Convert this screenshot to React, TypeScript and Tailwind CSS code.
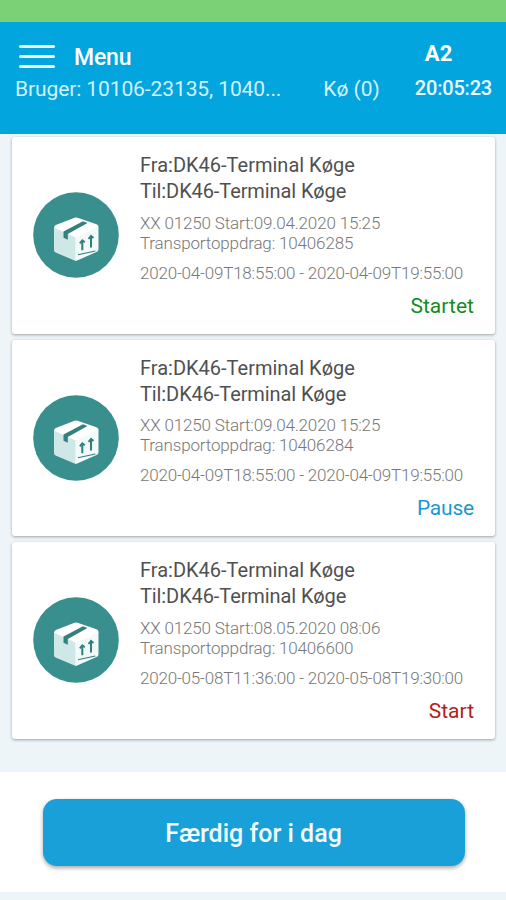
type Job = {
  id: string;
  start: string;
  period: string;
  status: string;
  statusClass: string;
};

const jobs: Job[] = [
  {
    id: '10406285',
    start: '09.04.2020 15:25',
    period: '2020-04-09T18:55:00 - 2020-04-09T19:55:00',
    status: 'Startet',
    statusClass: 'text-[#128c1e] tracking-[0.050px]',
  },
  {
    id: '10406284',
    start: '09.04.2020 15:25',
    period: '2020-04-09T18:55:00 - 2020-04-09T19:55:00',
    status: 'Pause',
    statusClass: 'text-[#1a98d0] tracking-[-0.200px]',
  },
  {
    id: '10406600',
    start: '08.05.2020 08:06',
    period: '2020-05-08T11:36:00 - 2020-05-08T19:30:00',
    status: 'Start',
    statusClass: 'text-[#b3201c]',
  },
];

function ParcelIcon() {
  return (
    <svg viewBox="0 0 86 86" className="size-[86px] shrink-0" aria-hidden="true">
      <circle cx="43" cy="43" r="42.8" fill="#398f8e" />
      <path d="M21 35 43 44V69L41.500 68.500 22.500 60.500Q21 59.800 21 58Z" fill="#cfe7e6" />
      <path d="M42.300 45.500 65.500 35V57Q65.500 59.300 63.500 60L44.200 68.500Q42.300 69.200 42.300 68Z" fill="#f1faf9" />
      <path d="M21.200 35.800Q21 33.800 22.800 33L41.500 25.800Q43 25.300 44.500 25.800L63.500 32.200Q65.800 33 65.500 35.500L43 45.800Z" fill="#ffffff" />
      <path d="M30.500 39.500 50 29.200 54.500 31 34.800 42V47.800L30.500 45.800Z" fill="#34807f" />
      <g stroke="#2f7f7f" fill="none">
        <path d="M49.300 58.300V49.500M58 55.500V45" strokeWidth="2" />
        <path d="M46.800 51.300 49.300 48.300 51.800 50.300M55.500 47 58 43.800 60.500 46" strokeWidth="1.800" />
        <path d="M45 62.800 62.300 59" strokeWidth="1.100" />
      </g>
    </svg>
  );
}

function JobCard({ job }: { job: Job }) {
  return (
    <article className="flex h-[196.500px] items-center rounded-[3px] bg-white pr-[21px] pl-[21px] shadow-[0_1px_3px_rgba(0,0,0,0.35)]">
      <ParcelIcon />
      <div className="ml-[21px] flex min-w-0 flex-1 flex-col whitespace-nowrap">
        <h2 className="text-[20px] leading-[26px] text-[#505050]">
          <span className="block">Fra:DK46-Terminal Køge</span>
          <span className="block tracking-[-0.100px]">Til:DK46-Terminal Køge</span>
        </h2>
        <p className="mt-[8.500px] text-[17px] leading-5 font-light tracking-[-0.160px] text-[#777777]">
          <span className="block">XX 01250 Start:{job.start}</span>
          <span className="block">Transportoppdrag: {job.id}</span>
        </p>
        <p className="mt-[10px] text-[17px] leading-5 font-light tracking-[-0.200px] text-[#777777]">{job.period}</p>
        <p className={`mt-[10px] -mb-[0.500px] text-right text-[21px] leading-[26px] ${job.statusClass}`}>{job.status}</p>
      </div>
    </article>
  );
}

export default function App() {
  return (
    <div className="flex h-[900px] w-[506px] flex-col overflow-hidden bg-[#eef5f9] font-['Roboto',sans-serif]">
      <div className="h-[21.500px] shrink-0 bg-[#7bd175]" />
      <header className="flex h-[112.500px] shrink-0 justify-between bg-[#02a5de] pr-[14px] pl-[15px] whitespace-nowrap text-white">
        <div className="pt-[20px]">
          <div className="flex h-[30px] items-center">
            <button aria-label="Menu" className="ml-1 flex w-9 flex-col gap-[6.500px]">
              <span className="h-[3.500px] rounded-full bg-[#e8faff]" />
              <span className="h-[3.500px] rounded-full bg-[#e8faff]" />
              <span className="h-[3.500px] rounded-full bg-[#e8faff]" />
            </button>
            <span className="ml-[19px] pt-[2px] text-[23px] leading-[30px] font-medium tracking-[-0.200px]">Menu</span>
          </div>
          <p className="mt-[2.500px] text-[21px] leading-[30px] tracking-[-0.100px] text-[#d3f1fc]">
            Bruger: 10106-23135, 1040...
          </p>
        </div>
        <div className="flex">
          <p className="pt-[52.500px] text-[21px] leading-[30px] text-[#d3f1fc]">Kø (0)</p>
          <div className="ml-[36px] flex flex-col pt-[17px]">
            <span className="ml-[9px] text-[22px] leading-[30px] font-bold">A2</span>
            <span className="mt-[4px] -ml-px text-[20px] leading-[30px] font-medium tracking-[-0.200px] text-[#effaff]">
              20:05:23
            </span>
          </div>
        </div>
      </header>
      <main className="flex h-[638px] shrink-0 flex-col gap-[6px] pt-[3px] pr-[11px] pl-[12px]">
        {jobs.map((job) => (
          <JobCard key={job.id} job={job} />
        ))}
      </main>
      <footer className="flex h-[120px] shrink-0 items-center bg-white pl-[42.500px]">
        <button className="h-[67px] w-[422px] rounded-[14px] bg-[#1aa0d8] pt-[3px] text-[25px] font-medium text-[#f2fbff] shadow-[0_2px_4px_rgba(0,0,0,0.35)]">
          Færdig for i dag
        </button>
      </footer>
    </div>
  );
}
